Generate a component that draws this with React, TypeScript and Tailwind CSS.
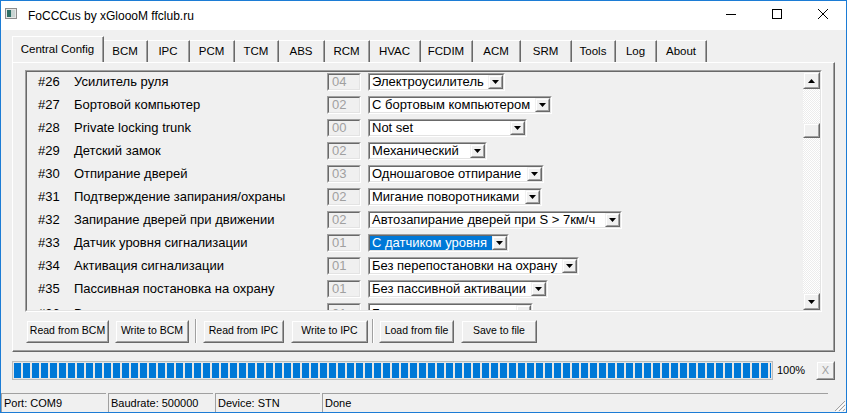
import React from 'react';

type Row = { n: number; label: string; code: string; value: string; w: number; sel?: boolean };

const rows: Row[] = [
  { n: 26, label: 'Усилитель руля', code: '04', value: 'Электроусилитель', w: 137 },
  { n: 27, label: 'Бортовой компьютер', code: '02', value: 'С бортовым компьютером', w: 184 },
  { n: 28, label: 'Private locking trunk', code: '00', value: 'Not set', w: 159 },
  { n: 29, label: 'Детский замок', code: '02', value: 'Механический', w: 119 },
  { n: 30, label: 'Отпирание дверей', code: '03', value: 'Одношаговое отпирание', w: 176 },
  { n: 31, label: 'Подтверждение запирания/охраны', code: '02', value: 'Мигание поворотниками', w: 174 },
  { n: 32, label: 'Запирание дверей при движении', code: '02', value: 'Автозапирание дверей при S > 7км/ч', w: 254 },
  { n: 33, label: 'Датчик уровня сигнализации', code: '01', value: 'С датчиком уровня', w: 141, sel: true },
  { n: 34, label: 'Активация сигнализации', code: '01', value: 'Без перепостановки на охрану', w: 211 },
  { n: 35, label: 'Пассивная постановка на охрану', code: '01', value: 'Без пассивной активации', w: 180 },
  { n: 36, label: 'Время автозапирания', code: '01', value: 'Без автозапирания', w: 165 },
];

const tabs: [string, number][] = [
  ['Central Config', 92], ['BCM', 44], ['IPC', 42], ['PCM', 45], ['TCM', 44], ['ABS', 46], ['RCM', 45],
  ['HVAC', 51], ['FCDIM', 52], ['ACM', 48], ['SRM', 51], ['Tools', 44], ['Log', 41], ['About', 50],
];

const Tri = ({ up }: { up?: boolean }) => (
  <svg width="7" height="4" viewBox="0 0 7 4">
    <polygon points={up ? '3.5,0 7,4 0,4' : '0,0 7,0 3.5,4'} fill="#000" />
  </svg>
);

// classic 3D raised box
const Raised = ({ className = '', children }: { className?: string; children?: React.ReactNode }) => (
  <div className={`shrink-0 border border-t-[#f0f0f0] border-l-[#f0f0f0] border-r-[#696969] border-b-[#696969] ${className}`}>
    <div className="w-full h-full flex items-center justify-center bg-[#f0f0f0] border border-t-white border-l-white border-r-[#a0a0a0] border-b-[#a0a0a0]">
      {children}
    </div>
  </div>
);

// classic 3D sunken box
const Sunken = ({ className = '', inner = '', children }: { className?: string; inner?: string; children?: React.ReactNode }) => (
  <div className={`shrink-0 border border-t-[#a0a0a0] border-l-[#a0a0a0] border-r-white border-b-white ${className}`}>
    <div className={`w-full h-full border border-t-[#696969] border-l-[#696969] border-r-[#e3e3e3] border-b-[#e3e3e3] ${inner}`}>
      {children}
    </div>
  </div>
);

const Combo = ({ row, low }: { row: Row; low: string }) => (
  <div style={{ width: row.w }}>
    <Sunken className="h-[18px]" inner="flex bg-white">
      <div className={`flex-1 flex items-center pl-[2px] text-[13px] whitespace-nowrap overflow-hidden ${row.sel ? 'bg-[#0078d7] text-white' : ''}`}>
        <span className={low}>{row.value}</span>
      </div>
      <Raised className="w-[15px] h-full">
        <Tri />
      </Raised>
    </Sunken>
  </div>
);

const AppIcon = () => (
  <svg width="12" height="11" viewBox="0 0 12 11">
    <rect x="0.5" y="0.5" width="11" height="10" fill="#e6e6e6" stroke="#8c8c8c" />
    <rect x="2" y="2" width="4" height="7" fill="#2f6f66" />
    <rect x="6" y="2" width="4" height="7" fill="#c8d4d2" />
  </svg>
);

const SizeGrip = () => (
  <svg width="12" height="12" viewBox="0 0 12 12">
    <path d="M11 1 L1 11 M11 5 L5 11 M11 9 L9 11" stroke="#a0a0a0" strokeWidth="1" />
    <path d="M12 2 L2 12 M12 6 L6 12 M12 10 L10 12" stroke="#ffffff" strokeWidth="1" />
  </svg>
);

const Btn = ({ label, w, ml }: { label: string; w: string; ml: string }) => (
  <Raised className={`h-[23px] ${w} ${ml}`}>
    <span className="text-[10.5px]">{label}</span>
  </Raised>
);

const Sep = ({ ml }: { ml: string }) => (
  <div className={`w-[2px] h-[24px] border-l border-r border-l-[#a0a0a0] border-r-white ${ml}`} />
);

export default function App() {
  return (
    <div className="w-[847px] h-[413px] overflow-hidden border border-[#1c7cd5] bg-[#f0f0f0] flex flex-col font-['Liberation_Sans',Arial,sans-serif] text-black select-none">
      {/* title bar */}
      <div className="h-[29px] bg-white flex items-center shrink-0">
        <div className="ml-[4px] -mt-[4px]">
          <AppIcon />
        </div>
        <span className="ml-[11px] text-[12px]">FoCCCus by xGloooM ffclub.ru</span>
        <div className="ml-auto flex h-full">
          <div className="w-[46px] h-full flex items-center justify-center">
            <svg width="10" height="10" viewBox="0 0 10 10" className="-mt-[3px]">
              <path d="M0 5.5 H10" stroke="#000" strokeWidth="1" />
            </svg>
          </div>
          <div className="w-[46px] h-full flex items-center justify-center">
            <svg width="10" height="10" viewBox="0 0 10 10" className="-mt-[3px]">
              <rect x="0.5" y="0.5" width="9" height="9" fill="none" stroke="#000" strokeWidth="1" />
            </svg>
          </div>
          <div className="w-[46px] h-full flex items-center justify-center">
            <svg width="10" height="10" viewBox="0 0 10 10" className="-mt-[3px]">
              <path d="M0 0 L10 10 M10 0 L0 10" stroke="#000" strokeWidth="1" />
            </svg>
          </div>
        </div>
      </div>

      <div className="flex-1 px-[11px] pt-[6px] flex flex-col">
        {/* tabs */}
        <div className="h-[26px] flex items-end shrink-0">
          {tabs.map(([t, w], i) =>
            i === 0 ? (
              <div key={t} style={{ width: w }} className="h-[26px] border-t border-l border-white border-r border-r-[#696969]">
                <div className="h-full flex items-center justify-center border-r border-r-[#a0a0a0] text-[11.5px]">{t}</div>
              </div>
            ) : (
              <div key={t} style={{ width: w }} className="h-[22px] border-t border-white border-r border-r-[#696969]">
                <div className="h-full flex items-center justify-center border-r border-r-[#a0a0a0] text-[11.5px]">{t}</div>
              </div>
            )
          )}
        </div>

        {/* tab panel */}
        <div className="w-[823px] h-[290px] shrink-0 border-t border-l border-white border-r border-b border-r-[#696969] border-b-[#696969]">
          <div className="w-full h-full border-r border-b border-r-[#a0a0a0] border-b-[#a0a0a0] pl-[12px] pt-[7px]">
            <Sunken className="w-[797px] h-[242px]" inner="flex">
              <div className="flex-1 overflow-hidden pl-[11px] pt-[1px]">
                {rows.map((r) => {
                  // last row is only partly scrolled into view
                  const low = r.n === 36 ? 'translate-y-[2px]' : '';
                  return (
                    <div key={r.n} className="flex items-center h-[18px] mb-[5px] text-[13px] whitespace-nowrap">
                      <span className={`w-[36px] shrink-0 ${low}`}>#{r.n}</span>
                      <span className={`w-[253px] shrink-0 ${low}`}>{r.label}</span>
                      <Sunken className="w-[34px] h-[18px]" inner="flex items-center pl-[3px] text-[#a0a0a0]">
                        <span className={low}>{r.code}</span>
                      </Sunken>
                      <div className="ml-[7px]">
                        <Combo row={r} low={low} />
                      </div>
                    </div>
                  );
                })}
              </div>
              <div className="w-[17px] h-full flex flex-col shrink-0">
                <Raised className="w-[17px] h-[17px]">
                  <Tri up />
                </Raised>
                <div className="flex-1 pt-[34px] bg-[image:repeating-conic-gradient(#ffffff_0_25%,#ececec_0_50%)] bg-[length:2px_2px]">
                  <Raised className="w-[17px] h-[15px]" />
                </div>
                <Raised className="w-[17px] h-[17px]">
                  <Tri />
                </Raised>
              </div>
            </Sunken>

            {/* buttons */}
            <div className="flex items-center mt-[7px] h-[24px]">
              <Btn label="Read from BCM" w="w-[83px]" ml="ml-[1px]" />
              <Btn label="Write to BCM" w="w-[74px]" ml="ml-[6px]" />
              <Sep ml="ml-[6px]" />
              <Btn label="Read from IPC" w="w-[81px]" ml="ml-[6px]" />
              <Btn label="Write to IPC" w="w-[77px]" ml="ml-[7px]" />
              <Sep ml="ml-[4px]" />
              <Btn label="Load from file" w="w-[75px]" ml="ml-[5px]" />
              <Btn label="Save to file" w="w-[76px]" ml="ml-[7px]" />
            </div>
          </div>
        </div>

        {/* progress */}
        <div className="mt-[8px] h-[20px] flex items-center shrink-0">
          <div className="w-[761px] h-[19px] border border-[#bcbcbc] bg-[#e6e6e6] p-[1px]">
            <div className="w-full h-full bg-[image:repeating-linear-gradient(90deg,#0078d7_0_7px,#e6e6e6_7px_9px)]" />
          </div>
          <span className="ml-[4px] text-[11px]">100%</span>
          <Raised className="ml-auto w-[19px] h-[19px]">
            <span className="text-[11px] text-[#a0a0a0]">X</span>
          </Raised>
        </div>
      </div>

      {/* status bar */}
      <div className="h-[19px] flex shrink-0 text-[11px]">
        <div className="w-[105px] border-t border-l border-[#a0a0a0] pl-[2px] flex items-center">Port: COM9</div>
        <div className="w-[105px] ml-[2px] border-t border-l border-[#a0a0a0] pl-[2px] flex items-center">Baudrate: 500000</div>
        <div className="w-[105px] ml-[2px] border-t border-l border-[#a0a0a0] pl-[2px] flex items-center">Device: STN</div>
        <div className="flex-1 ml-[2px] border-t border-l border-[#a0a0a0] pl-[2px] flex items-center">Done</div>
        <div className="w-[18px] flex items-end justify-end">
          <SizeGrip />
        </div>
      </div>
    </div>
  );
}
